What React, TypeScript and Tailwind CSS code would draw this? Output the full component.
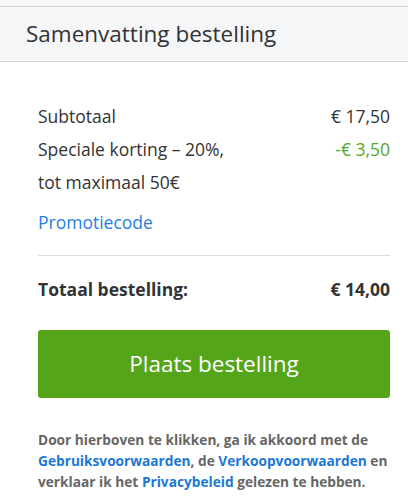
export default function App() {
  return (
    <div
      className="w-[408px] min-h-[497px] bg-white text-[#333]"
      style={{ fontFamily: '"Open Sans", "Liberation Sans", sans-serif' }}
    >
      <div className="bg-[#f5f6f8] pt-[6px]">
        <div className="flex h-[56px] items-center border-y border-[#d6d7d9] pl-[26px]">
          <h2 className="text-[22.5px] leading-none text-[#333]">Samenvatting bestelling</h2>
        </div>
      </div>

      <div className="pl-[38px] pr-[18px] pt-[38px]">
        <div className="flex justify-between text-[17.5px] leading-[33px]">
          <span>Subtotaal</span>
          <span>€ 17,50</span>
        </div>
        <div className="flex justify-between text-[17.5px] leading-[33px]">
          <span>
            Speciale korting – 20%,
            <br />
            tot maximaal 50€
          </span>
          <span className="text-[#5aa62a]">-€ 3,50</span>
        </div>
        <div className="mt-[7px] text-[17.5px] leading-[33px]">
          <a className="text-[#1f7fe0]">Promotiecode</a>
        </div>

        <div className="mt-[16px] border-t border-[#dcdcdc]" />

        <div className="mt-[17px] flex justify-between text-[17.5px] font-bold leading-[33px]">
          <span>Totaal bestelling:</span>
          <span>€ 14,00</span>
        </div>

        <button className="mt-[24px] flex h-[68px] w-full items-center justify-center rounded-[3px] bg-[#55a51b] text-[22.5px] text-white">
          Plaats bestelling
        </button>

        <p className="mt-[31px] text-[13.7px] font-bold leading-[21px] text-[#666]">
          Door hierboven te klikken, ga ik akkoord met de{" "}
          <a className="text-[#1a78d6]">Gebruiksvoorwaarden</a>, de{" "}
          <a className="text-[#1a78d6]">Verkoopvoorwaarden</a> en verklaar ik het{" "}
          <a className="text-[#1a78d6]">Privacybeleid</a> gelezen te hebben.
        </p>
      </div>
    </div>
  );
}
